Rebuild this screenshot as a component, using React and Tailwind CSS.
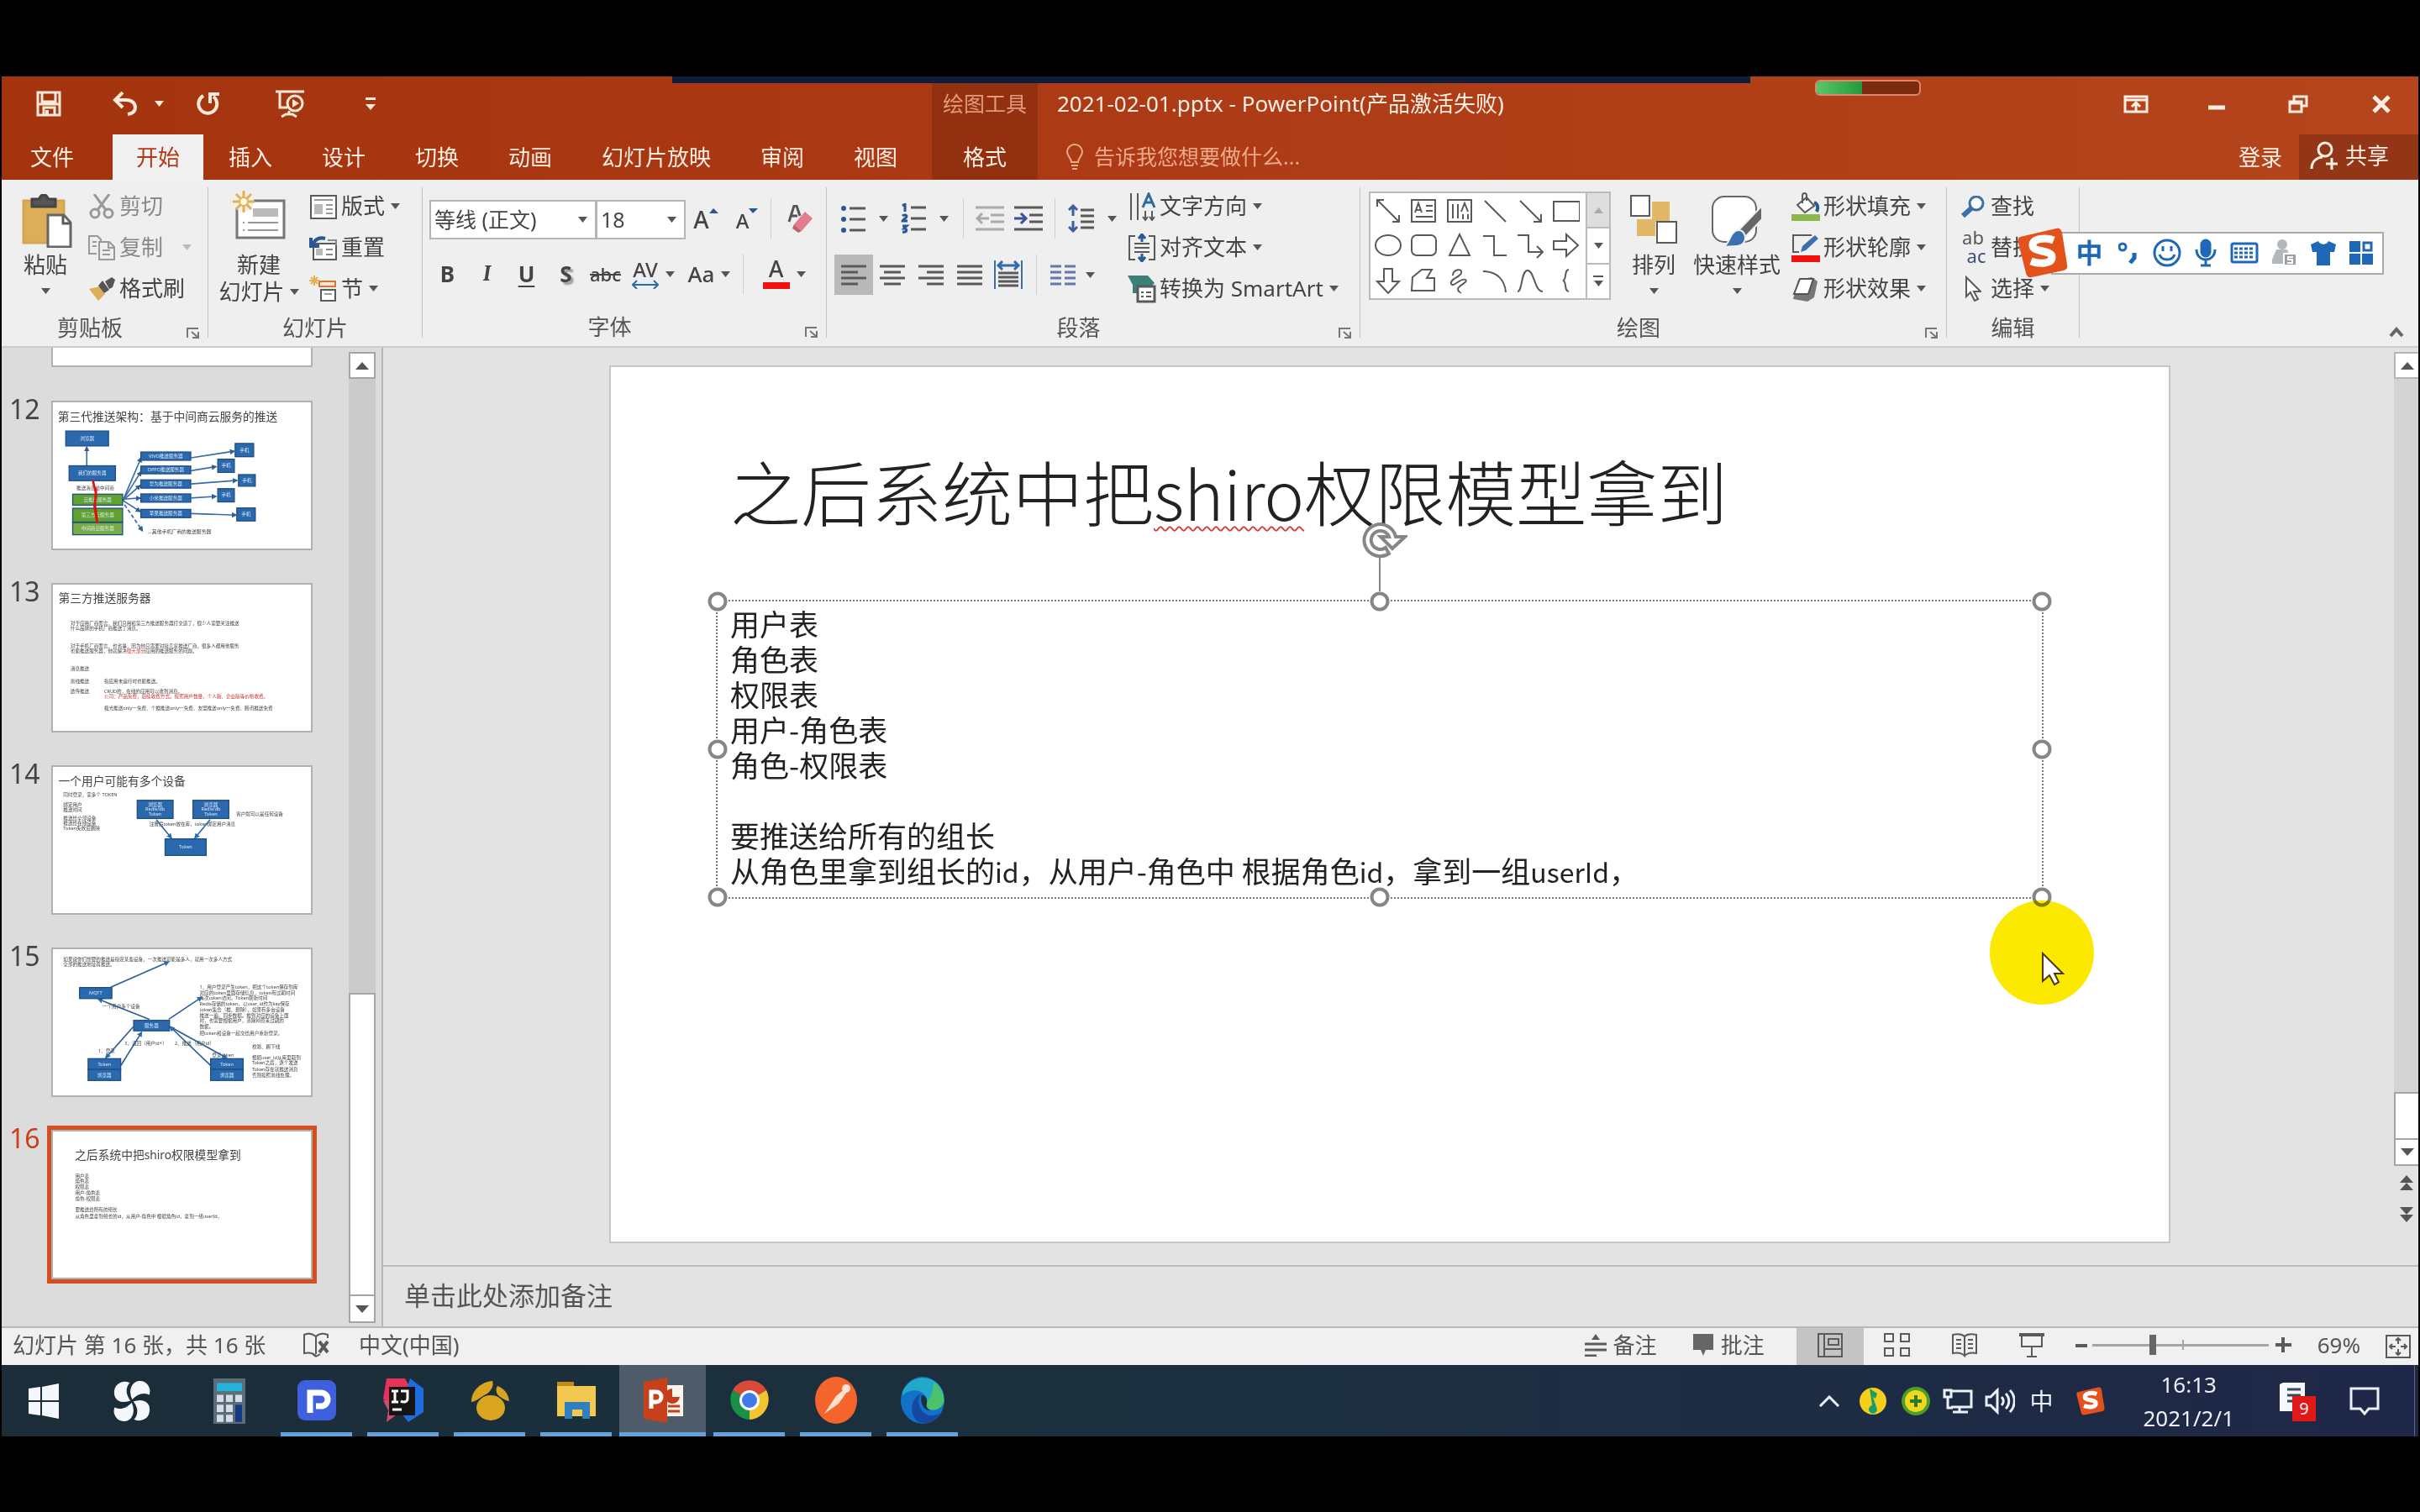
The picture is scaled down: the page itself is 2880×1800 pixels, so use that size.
import React from "react";

const Svg = ({ w, h, vb, children, className = "", ...rest }) => (
  <svg
    width={w}
    height={h}
    viewBox={vb || `0 0 ${w} ${h}`}
    fill="none"
    stroke="#5a5a5a"
    strokeWidth="2"
    aria-hidden="true"
    className={`shrink-0 ${className}`}
    {...rest}
  >
    {children}
  </svg>
);

const Caret = ({ fill = "#555" }) => (
  <svg width="11" height="7" viewBox="0 0 11 7" aria-hidden="true" className="shrink-0">
    <path d="M0 0h11L5.5 7z" fill={fill} />
  </svg>
);

/* ---------- title bar ---------- */

const tabs = ["插入", "设计", "切换", "动画", "幻灯片放映", "审阅", "视图"];

function QuickAccess() {
  return (
    <div className="flex h-[69px] items-center pb-[4px] pl-[41px]">
      <button aria-label="保存" className="mr-[61px]">
        <Svg w={30} h={31} stroke="#fbe9da" strokeWidth="3">
          <path d="M2 2h26v27H2z" />
          <path d="M7 2v11h16V2M3 16h24" />
          <path d="M9 29v-9h13v9" />
          <path d="M13 23v6" strokeWidth="4" />
        </Svg>
      </button>
      <button aria-label="撤消" className="mr-5">
        <Svg w={30} h={29} stroke="#fbe9da" strokeWidth="4">
          <path d="M3 10h13c7 0 11 4 11 9 0 4-3 7-9 8" />
          <path d="M12 1L3 10l9 9" />
        </Svg>
      </button>
      <button aria-label="撤消选项" className="mr-[38px]">
        <Caret fill="#fbe9da" />
      </button>
      <button aria-label="重复" className="mr-[66px]">
        <Svg w={29} h={29} stroke="#fbe9da" strokeWidth="4">
          <path d="M9 5a11 11 0 1 0 12 1" />
          <path d="M17 14V3h11" />
        </Svg>
      </button>
      <button aria-label="从头开始" className="mr-[72px]">
        <Svg w={35} h={34} stroke="#fbe9da" strokeWidth="3">
          <path d="M0 2h34M5 3v18h9" />
          <circle cx="23" cy="16" r="9" />
          <path d="M20 11v10l8-5z" fill="#fbe9da" stroke="none" />
          <path d="M16 25v4M7 32l5-3h8l5 3" />
        </Svg>
      </button>
      <button aria-label="自定义快速访问工具栏">
        <Svg w={12} h={15} stroke="none">
          <path d="M0 0h12v3H0zM0 8h12l-6 7z" fill="#fbe9da" />
        </Svg>
      </button>
    </div>
  );
}

function Header() {
  return (
    <header className="relative flex bg-linear-to-r from-[#a4340e] via-[#ad3b15] to-[#b5451c] text-[#fdeee4]">
      <div className="w-[1107px] shrink-0">
        <QuickAccess />
        <nav className="flex h-[54px] text-[26px] leading-[46px]">
          <button className="w-[120px]">文件</button>
          <button className="ml-3 w-[108px] bg-[#f0f0f0] text-[#b03c17]">开始</button>
          {tabs.map((t) => (
            <button key={t} className="pl-[30px] pr-[29px]">
              {t}
            </button>
          ))}
        </nav>
      </div>
      <div className="w-[126px] shrink-0 bg-[#933010] text-center">
        <div className="h-[69px] text-[25px] leading-[65px] text-[#e29a7b]">绘图工具</div>
        <button className="h-[54px] w-full text-[26px] leading-[46px]">格式</button>
      </div>
      <div className="min-w-0 flex-1">
        <div className="flex h-[69px] items-center justify-between pb-[4px] pl-[23px] pr-[33px]">
          <h2 className="text-[26px]">2021-02-01.pptx - PowerPoint(产品激活失败)</h2>
          <div className="flex items-center">
            <button aria-label="功能区显示选项" className="mr-[70px]">
              <Svg w={30} h={22} stroke="#fdeee4" strokeWidth="3">
                <path d="M2 2h26v18H2zM2 6h26" />
                <path d="M15 20V10M10 14l5-5 5 5" />
              </Svg>
            </button>
            <button aria-label="最小化" className="mr-[74px]">
              <Svg w={22} h={22} stroke="#fdeee4" strokeWidth="5">
                <path d="M1 15h20" />
              </Svg>
            </button>
            <button aria-label="向下还原" className="mr-[76px]">
              <Svg w={24} h={22} stroke="#fdeee4" strokeWidth="3">
                <path d="M2 8h14v12H2zM2 10h14" />
                <path d="M7 7V2h15v11h-5" />
              </Svg>
            </button>
            <button aria-label="关闭">
              <Svg w={22} h={22} stroke="#fdeee4" strokeWidth="5">
                <path d="M2 2l18 18M20 2L2 20" />
              </Svg>
            </button>
          </div>
        </div>
        <div className="flex h-[54px] items-center">
          <Svg w={22} h={32} className="ml-[33px]" stroke="#eda98a" strokeWidth="2">
            <path d="M7 22c0-5-5-7-5-12a9 9 0 0 1 18 0c0 5-5 7-5 12zM7 26h8M8 30h6" />
          </Svg>
          <input
            aria-label="告诉我您想要做什么"
            placeholder="告诉我您想要做什么..."
            className="ml-3 w-[300px] bg-transparent text-[25px] outline-none placeholder:text-[#eda98a]"
          />
          <button className="ml-auto mr-5 h-[54px] text-[26px] leading-[46px]">登录</button>
          <button className="flex h-[54px] w-[142px] items-center gap-[6px] bg-[#933617] pb-1 pl-[13px] text-[26px]">
            <Svg w={36} h={34} stroke="#fdeee4" strokeWidth="3">
              <circle cx="18" cy="10" r="8" />
              <path d="M2 33c0-8 5-13 13-14M26 20v14M19 27h14" />
            </Svg>
            共享
          </button>
        </div>
      </div>
      <div className="absolute left-[798px] top-0 h-2 w-[1283px] bg-[#101c3c]" />
      <div className="absolute left-[2158px] top-1 flex h-[19px] w-[126px] overflow-hidden rounded-[6px] border-2 border-[#d98a6c] bg-[#7d2b10]">
        <div className="w-[44%] bg-linear-to-r from-[#5cc56a] to-[#1e9a3c]" />
      </div>
    </header>
  );
}

/* ---------- ribbon ---------- */

function Group({ label, width, launcher, children }) {
  return (
    <section className={`flex shrink-0 ${width}`}>
      <div className="flex min-w-0 flex-1 flex-col">
        <div className="flex h-[147px]">{children}</div>
        <div className="flex flex-1 items-center text-[26px] leading-[45px] text-[#555]">
          <span className={`flex-1 text-center ${launcher ? "pr-[10px]" : ""}`}>{label}</span>
          {launcher && (
            <button aria-label={`${label}选项`} className="mr-[9px] mt-3">
              <Svg w={16} h={13} stroke="#777">
                <path d="M1 12V1h13M6 5l8 7M14 5v7H7" />
              </Svg>
            </button>
          )}
        </div>
      </div>
      <div className="mb-[10px] mt-[2px] w-px bg-[#c4c4c4]" />
    </section>
  );
}

const Row = ({ icon, children, caret, muted }) => (
  <button
    className={`flex h-[49px] items-center gap-[4px] whitespace-nowrap text-[26px] ${muted ? "text-[#888]" : "text-[#444]"}`}
  >
    <span className="flex w-[34px] shrink-0 justify-center">{icon}</span>
    <span className="flex items-center gap-[7px]">
      {children}
      {caret && <Caret fill={muted ? "#bbb" : "#555"} />}
    </span>
  </button>
);

const Sep = ({ className = "" }) => <div className={`h-12 w-px shrink-0 bg-[#cfcfcf] ${className}`} />;

const Tool = ({ label, children, className = "w-[47px]" }) => (
  <button aria-label={label} className={`flex h-12 shrink-0 items-center justify-center text-[#444] ${className}`}>
    {children}
  </button>
);

function Clipboard() {
  return (
    <Group label="剪贴板" width="w-[246px]" launcher>
      <button className="ml-[14px] flex w-[76px] shrink-0 flex-col items-center pt-[10px] text-[26px] leading-8 text-[#444]">
        <Svg w={60} h={64} className="ml-1" strokeWidth="3">
          <path d="M2 8h48v50H2z" fill="#dcae5a" stroke="#d2a552" />
          <path d="M12 6h9a5 5 0 0 1 10 0h9v9H12z" fill="#555" stroke="#444" />
          <path d="M31 25h19l8 9v29H31z" fill="#fff" stroke="#666" />
          <path d="M49 26v9h9" />
        </Svg>
        <span className="mt-1">粘贴</span>
        <span className="mt-3">
          <Caret />
        </span>
      </button>
      <div className="ml-3 flex flex-col">
        <Row
          muted
          icon={
            <Svg w={30} h={30} stroke="#999" strokeWidth="3">
              <circle cx="7" cy="23" r="5" />
              <circle cx="23" cy="23" r="5" />
              <path d="M6 0l14 19M24 0L10 19" />
            </Svg>
          }
        >
          剪切
        </Row>
        <Row
          muted
          icon={
            <Svg w={32} h={30} stroke="#999" strokeWidth="2">
              <path d="M10 22H1V1h10l4 4v2M13 8h12l6 6v15H13zM24 8v7h7M5 8h5M5 13h5M17 18h9M17 23h9" />
            </Svg>
          }
        >
          复制
          <span className="ml-4 flex">
            <Caret fill="#bbb" />
          </span>
        </Row>
        <Row
          icon={
            <Svg w={32} h={28} stroke="none">
              <path d="M1 14l13-3 6 9-8 8z" fill="#dcae5a" />
              <path d="M12 10l5-6 8 11-6 4z" fill="#555" />
              <path d="M20 5l8-5 4 3-3 9-4 2z" fill="#555" />
            </Svg>
          }
        >
          格式刷
        </Row>
      </div>
    </Group>
  );
}

function Slides() {
  return (
    <Group label="幻灯片" width="w-[255px]">
      <button className="ml-2 flex w-[104px] shrink-0 flex-col items-center pt-[6px] text-[26px] leading-8 text-[#444]">
        <Svg w={66} h={60}>
          <path d="M7 12h56v44H7z" fill="#fff" stroke="#777" strokeWidth="3" />
          <path d="M26 21h30v10H26z" fill="#bbb" stroke="none" />
          <path d="M14 38h2M14 47h2M20 38h36M20 47h36" stroke="#999" />
          <circle cx="15" cy="13" r="12" fill="#f0f0f0" stroke="none" />
          <path d="M15 0v26M2 13h26M6 4l18 18M24 4L6 22" stroke="#e3b052" strokeWidth="3" />
          <circle cx="15" cy="13" r="5" fill="#fff8e6" stroke="#e3b052" />
        </Svg>
        <span className="mt-3">新建</span>
        <span className="flex items-center gap-[6px]">
          幻灯片
          <Caret />
        </span>
      </button>
      <div className="ml-2 flex flex-col">
        <Row
          caret
          icon={
            <Svg w={34} h={30}>
              <path d="M2 2h30v27H2z" fill="#fff" />
              <path d="M6 7h22M20 13h8M20 18h8M20 23h8" stroke="#999" />
              <path d="M6 12h10v12H6z" fill="#bbb" stroke="none" />
            </Svg>
          }
        >
          版式
        </Row>
        <Row
          icon={
            <Svg w={34} h={30}>
              <path d="M5 10h27v19H5z" fill="#fff" />
              <path d="M22 6h10v6M20 17h8M20 23h8" stroke="#888" />
              <path d="M8 16h8v8H8z" fill="#bbb" stroke="none" />
              <path d="M4 12C6 5 12 2 19 4M2 3v10h10" stroke="#2b5797" strokeWidth="4" />
            </Svg>
          }
        >
          重置
        </Row>
        <Row
          caret
          icon={
            <Svg w={34} h={32}>
              <path d="M12 7h19v6H12z" stroke="#d07a3c" fill="#fbe3cf" />
              <path d="M14 17h17v13H14z" fill="#fff" />
              <path d="M18 22h9" stroke="#999" />
              <path d="M6 0v12M0 6h12M2 2l8 8M10 2l-8 8" stroke="#e3b052" />
            </Svg>
          }
        >
          节
        </Row>
      </div>
    </Group>
  );
}

function ComboBox({ label, value, width }) {
  return (
    <label className={`relative -mr-px block h-[47px] border-2 border-[#b5b5b5] bg-white ${width}`}>
      <select aria-label={label} className="h-full w-full appearance-none bg-transparent px-1 text-[25px] leading-[38px] text-[#444]">
        <option>{value}</option>
      </select>
      <span className="pointer-events-none absolute right-[9px] top-[18px]">
        <Caret />
      </span>
    </label>
  );
}

function FontGroup() {
  return (
    <Group label="字体" width="w-[481px]" launcher>
      <div className="pl-[8px] pt-[16px]">
        <div className="flex items-center">
          <ComboBox label="字体" value="等线 (正文)" width="w-[199px]" />
          <ComboBox label="字号" value="18" width="w-[107px]" />
          <Tool label="增大字号" className="w-[50px]">
            <span className="text-[28px] font-medium">A</span>
            <Svg w={11} h={6} className="-mt-5" stroke="none">
              <path d="M0 6h11L5 0z" fill="#2b5797" />
            </Svg>
          </Tool>
          <Tool label="减小字号" className="w-12">
            <span className="mt-1 text-[24px] font-medium">A</span>
            <Svg w={11} h={6} className="-mt-5" stroke="none">
              <path d="M0 0h11L5 6z" fill="#2b5797" />
            </Svg>
          </Tool>
          <Sep className="mx-1" />
          <Tool label="清除所有格式" className="w-[60px]">
            <Svg w={32} h={34} stroke="none">
              <path d="M3 20L9 1h3l4 12M5 13h8" stroke="#555" strokeWidth="3" />
              <path d="M9 23L22 8l9 8-13 15z" fill="#e27d8d" />
              <path d="M9 23l9 8-4 2-7-5z" fill="#c45f70" />
            </Svg>
          </Tool>
        </div>
        <div className="-ml-[2px] mt-[17px] flex items-center text-[26px]">
          <Tool label="加粗"><b>B</b></Tool>
          <Tool label="倾斜"><i className="font-serif font-bold">I</i></Tool>
          <Tool label="下划线"><b className="underline decoration-2 underline-offset-4">U</b></Tool>
          <Tool label="文字阴影"><b className="text-shadow-[3px_3px_2px_#999]">S</b></Tool>
          <Tool label="删除线"><span className="text-[22px] font-medium line-through">abc</span></Tool>
          <Tool label="字符间距" className="w-[67px] gap-2">
            <span className="flex flex-col items-center text-[24px] leading-6 font-medium">
              AV
              <Svg w={32} h={11} stroke="#2b6cb0" strokeWidth="2">
                <path d="M1 6h30M6 1L1 6l5 5M26 1l5 5-5 5" />
              </Svg>
            </span>
            <Caret />
          </Tool>
          <Tool label="更改大小写" className="w-[66px] gap-2"><span className="font-medium">Aa</span><Caret /></Tool>
          <Sep className="ml-[7px] mr-[11px]" />
          <Tool label="字体颜色" className="w-[74px] gap-2">
            <span className="flex w-8 flex-col items-center text-[27px] font-medium leading-6">
              A
              <span className="mt-1 h-2 w-8 bg-[#f01010]" />
            </span>
            <Caret />
          </Tool>
        </div>
      </div>
    </Group>
  );
}

const Lines = ({ d, color = "#5a5a5a" }) => (
  <Svg w={30} h={28} stroke={color} strokeWidth="3">
    <path d={d} />
  </Svg>
);

function Paragraph() {
  return (
    <Group label="段落" width="w-[635px]" launcher>
      <div className="w-[349px] shrink-0 pl-[9px] pt-[15px]">
        <div className="flex items-center">
          <Tool label="项目符号" className="w-[70px] gap-4">
            <Svg w={30} h={34} strokeWidth="3">
              <path d="M11 5h19M11 18h19M11 31h19" />
              <g fill="#2b5797" stroke="none"><circle cx="4" cy="5" r="3" /><circle cx="4" cy="18" r="3" /><circle cx="4" cy="31" r="3" /></g>
            </Svg>
            <Caret />
          </Tool>
          <Tool label="编号" className="w-[75px] gap-4">
            <Svg w={30} h={36} strokeWidth="3">
              <path d="M12 5h18M12 18h18M12 31h18" />
              <path d="M2 3l3-2v9M2 15c2-2 5-1 5 1 0 1-5 4-5 5h6M2 27h5l-3 3c4 0 4 5-2 4" stroke="#2b5797" />
            </Svg>
            <Caret />
          </Tool>
          <Sep className="mx-[8px]" />
          <Tool label="减少缩进" className="w-[46px]">
            <Svg w={34} h={30} stroke="#aaa" strokeWidth="3">
              <path d="M0 2h34M18 11h16M18 19h16M0 28h34M2 15h14M8 9l-6 6 6 6" />
            </Svg>
          </Tool>
          <Tool label="增加缩进" className="w-[46px]">
            <Svg w={34} h={30} strokeWidth="3">
              <path d="M0 2h34M18 11h16M18 19h16M0 28h34" />
              <path d="M0 15h14M8 9l6 6-6 6" stroke="#3b4f9a" />
            </Svg>
          </Tool>
          <Sep className="mx-[8px]" />
          <Tool label="行距" className="w-[72px] gap-4">
            <Svg w={31} h={34} strokeWidth="3">
              <path d="M15 7h16M15 14h16M15 21h16M15 28h16" />
              <path d="M6 2v12M6 20v12M1 7l5-5 5 5M1 27l5 5 5-5" stroke="#3b5fa0" />
            </Svg>
            <Caret />
          </Tool>
        </div>
        <div className="mt-[19px] flex items-center">
          <Tool label="左对齐" className="w-[46px] bg-[#b9b9b9]"><Lines d="M0 4h30M0 11h20M0 18h30M0 25h20" /></Tool>
          <Tool label="居中" className="w-[46px]"><Lines d="M0 4h30M5 11h20M0 18h30M5 25h20" /></Tool>
          <Tool label="右对齐" className="w-[46px]"><Lines d="M0 4h30M10 11h20M0 18h30M10 25h20" /></Tool>
          <Tool label="两端对齐" className="w-[46px]"><Lines d="M0 4h30M0 11h30M0 18h30M0 25h30" /></Tool>
          <Tool label="分散对齐" className="w-[46px]">
            <Svg w={34} h={34}>
              <path d="M1 0v34M33 0v34" stroke="#3b6fa8" />
              <path d="M5 15h24M5 20h24M5 25h24M5 30h24" strokeWidth="3" />
              <path d="M5 6h24M10 1L5 6l5 5M24 1l5 5-5 5" stroke="#2b6cb0" strokeWidth="3" />
            </Svg>
          </Tool>
          <Sep className="ml-[10px] mr-1" />
          <Tool label="分栏" className="w-[76px] gap-3">
            <Lines color="#6679a8" d="M0 4h13M17 4h13M0 11h13M17 11h13M0 18h13M17 18h13M0 25h13M17 25h13" />
            <Caret />
          </Tool>
        </div>
      </div>
      <div className="ml-[9px] flex flex-col">
        <Row
          caret
          icon={
            <Svg w={34} h={34}>
              <path d="M4 1v32M12 1v32M21 22v11M29 22v11" strokeWidth="2" />
              <path d="M18 29l3 4 3-4M26 29l3 4 3-4" />
              <path d="M18 18l7-16 7 16M21 12h8" stroke="#2b6c9a" strokeWidth="3" />
            </Svg>
          }
        >
          文字方向
        </Row>
        <Row
          caret
          icon={
            <Svg w={34} h={34}>
              <path d="M9 3H2v28h7M25 3h7v28h-7M8 12h18M8 17h18M8 22h18" />
              <path d="M17 1v9M17 24v9M13 6l4-5 4 5M13 28l4 5 4-5" stroke="#2b5797" strokeWidth="3" />
            </Svg>
          }
        >
          对齐文本
        </Row>
        <Row
          caret
          icon={
            <Svg w={34} h={34} strokeWidth="3">
              <path d="M0 1h24l8 9-5 5H12v7H6V12z" fill="#3b7f76" stroke="none" />
              <path d="M12 14h20v18H12z" fill="#fff" />
              <path d="M16 21h3M22 21h6M16 26h3M22 26h6" strokeWidth="2" />
            </Svg>
          }
        >
          转换为 SmartArt
        </Row>
      </div>
    </Group>
  );
}

const shapes = [
  <path d="M3 3l26 26M3 11V3h8M21 29h8v-8" />,
  <><path d="M2 3h28v26H2zM19 10h8M19 16h8M7 23h20" /><path d="M6 18l4-11 4 11M7 15h6" /></>,
  <><path d="M2 3h28v26H2zM8 8v17M14 8v17M20 20v6M26 20v6" /><path d="M18 17l4-10 4 10" /></>,
  <path d="M4 4l25 25" />,
  <path d="M4 4l25 25M29 20v9h-9" />,
  <path d="M1 5h31v23H1z" />,
  <ellipse cx="16" cy="16" rx="15" ry="12" />,
  <rect x="2" y="4" width="29" height="24" rx="6" />,
  <path d="M16 3L4 28h24z" />,
  <path d="M2 5h13v23h15" />,
  <path d="M1 4h13v20h16M24 17l7 7-7 7" />,
  <path d="M1 11h15V3l14 13-14 13v-8H1z" />,
  <path d="M11 2h10v15h8L16 31 3 17h8z" />,
  <path d="M3 12L14 3h12l-6 10h9v15H2z" />,
  <path d="M8 10c0-8 12-9 10-3-1 5-14 7-12 13 2 5 12-8 17-5 4 3-9 7-9 11s4 4 3 5" />,
  <path d="M2 5c16 0 26 10 27 25" />,
  <path d="M1 29C7 29 5 4 13 4s8 25 18 25" />,
  <path d="M19 3c-6 0-2 12-7 13 5 1 1 13 7 13" />,
];

function Drawing() {
  return (
    <Group label="绘图" width="w-[698px]" launcher>
      <div className="ml-[10px] mt-[7px] flex h-[129px] w-[288px] shrink-0 border-2 border-[#bbb] bg-white">
        <div className="grid flex-1 grid-cols-6 grid-rows-3 place-items-center pr-[2px]">
          {shapes.map((s, i) => (
            <button key={i} aria-label={`形状 ${i + 1}`}>
              <Svg w={32} h={32}>{s}</Svg>
            </button>
          ))}
        </div>
        <div className="flex w-7 flex-col border-l-2 border-[#bbb]">
          <button aria-label="上一行" className="flex flex-1 items-center justify-center bg-[#dedede]">
            <span className="rotate-180"><Caret fill="#aaa" /></span>
          </button>
          <button aria-label="下一行" className="flex flex-1 items-center justify-center border-y-2 border-[#bbb]"><Caret /></button>
          <button aria-label="其他形状" className="flex flex-1 flex-col items-center justify-center gap-1">
            <span className="h-[2px] w-3 bg-[#555]" />
            <Caret />
          </button>
        </div>
      </div>
      <button className="ml-[15px] flex w-[72px] shrink-0 flex-col items-center pt-[10px] text-[26px] leading-8 text-[#444]">
        <Svg w={58} h={60} strokeWidth="2">
          <path d="M27 9h21v24H27zM9 30h22v20H9z" fill="#e2b867" stroke="none" />
          <path d="M2 2h22v24H2zM33 33h23v25H33z" fill="#fff" />
        </Svg>
        <span className="mt-2">排列</span>
        <span className="mt-3"><Caret /></span>
      </button>
      <button className="ml-[6px] flex w-[114px] shrink-0 flex-col items-center pt-[10px] text-[26px] leading-8 text-[#444]">
        <Svg w={64} h={64}>
          <rect x="3" y="3" width="52" height="54" rx="14" fill="#fff" stroke="#666" />
          <path d="M62 14v16L42 51l-8-8z" fill="#666" stroke="#f0f0f0" />
          <path d="M16 63c7-2 8-20 18-20s12 18-2 19z" fill="#3a6fb0" stroke="#f0f0f0" />
        </Svg>
        <span className="mt-1">快速样式</span>
        <span className="mt-3"><Caret /></span>
      </button>
      <div className="ml-[8px] flex flex-col">
        <Row
          caret
          icon={
            <Svg w={34} h={34}>
              <path d="M7 15l11-9 9 10-11 8z" fill="#fff" />
              <path d="M13 13V4c0-4 5-4 5 0v6" />
              <path d="M27 12c5 2 5 7 3 11" stroke="#2b5797" strokeWidth="4" />
              <path d="M0 26h34v8H0z" fill="#8bb84a" stroke="none" />
            </Svg>
          }
        >
          形状填充
        </Row>
        <Row
          caret
          icon={
            <Svg w={34} h={34}>
              <path d="M24 2H2v20h7" />
              <path d="M11 22l2-7L28 2l4 4-15 14z" fill="#3a6fb0" stroke="none" />
              <path d="M0 26h34v8H0z" fill="#f01010" stroke="none" />
            </Svg>
          }
        >
          形状轮廓
        </Row>
        <Row
          caret
          icon={
            <Svg w={34} h={30}>
              <path d="M8 4l16-3 7 5-4 19-8 5-17-3z" fill="#777" stroke="none" />
              <path d="M10 3h16l-6 18H3z" fill="#fff" stroke="#555" />
            </Svg>
          }
        >
          形状效果
        </Row>
      </div>
    </Group>
  );
}

function Editing() {
  return (
    <Group label="编辑" width="w-[158px]">
      <div className="ml-[14px] flex flex-col">
        <Row
          icon={
            <Svg w={30} h={26} stroke="#3a6fa8" strokeWidth="3">
              <circle cx="19" cy="9" r="8" fill="#fff" />
              <path d="M13 15L3 24" strokeWidth="6" />
            </Svg>
          }
        >
          查找
        </Row>
        <Row
          icon={
            <span className="flex flex-col pb-1 text-[22px] leading-[22px] text-[#555]">
              ab
              <span className="ml-2 text-[#3a4f7a]">ac</span>
            </span>
          }
        >
          替换
        </Row>
        <Row
          caret
          icon={
            <Svg w={20} h={32}>
              <path d="M2 2v23l5-5 5 10 4-2-5-9h8z" fill="#fff" />
            </Svg>
          }
        >
          选择
        </Row>
      </div>
    </Group>
  );
}

const SogouMark = ({ w, h }) => (
  <Svg w={w} h={h} vb="0 0 60 60" stroke="none">
    <path d="M3 11L46 1c4-1 6 1 7 5l6 38c1 4-1 6-4 7L17 59c-4 1-6-1-7-5L1 18c-1-4 0-6 2-7z" fill="#e4521b" />
    <path d="M43 15c-10-4-25-2-25 6 0 9 23 5 23 14 0 8-14 9-25 5" stroke="#fff" strokeWidth="9" />
  </Svg>
);

function SogouBar() {
  const c = "#1f68b8";
  return (
    <div className="absolute right-[41px] top-[56px] flex items-center">
      <button aria-label="搜狗输入法" className="relative z-10 -mr-[20px]"><SogouMark w={60} h={60} /></button>
      <div className="flex h-[51px] w-[396px] items-center border-2 border-[#aaa] bg-white pl-[20px]">
        <button className="w-[47px] text-center text-[32px] font-bold leading-8 text-[#1f68b8]">中</button>
        <button aria-label="标点" className="flex w-[46px] justify-center">
          <Svg w={24} h={26} stroke={c} strokeWidth="3"><circle cx="5" cy="6" r="4" /><path d="M19 13v6l-5 6" strokeWidth="5" /></Svg>
        </button>
        <button aria-label="表情" className="flex w-[46px] justify-center">
          <Svg w={34} h={34} stroke={c} strokeWidth="3"><circle cx="17" cy="17" r="15" /><path d="M12 9v6M22 9v6M8 19c3 8 15 8 18 0" /></Svg>
        </button>
        <button aria-label="语音" className="flex w-[46px] justify-center">
          <Svg w={26} h={34} stroke={c} strokeWidth="3"><rect x="8" y="2" width="10" height="19" rx="5" fill={c} /><path d="M2 13c0 16 22 16 22 0M13 25v8M7 32h12" /></Svg>
        </button>
        <button aria-label="键盘" className="flex w-[46px] justify-center">
          <Svg w={34} h={26} stroke={c} strokeWidth="3"><rect x="2" y="2" width="30" height="22" rx="2" /><path d="M5 8h24M5 13h24M5 18h24" strokeDasharray="4 2" /></Svg>
        </button>
        <button aria-label="账户" className="flex w-[48px] justify-center">
          <Svg w={32} h={32} stroke="none"><circle cx="14" cy="6" r="6" fill="#b4b8bd" /><path d="M2 24l5-12h13l5 12v5H2z" fill="#b4b8bd" /><path d="M16 17h15v14H16z" fill="#9ba0a6" stroke="#fff" /><path d="M27 21h-6v3h5v4h-6" stroke="#fff" /></Svg>
        </button>
        <button aria-label="皮肤" className="flex w-[46px] justify-center">
          <Svg w={30} h={30} stroke="none"><path d="M9 1c2 5 10 5 12 0l9 4-2 9h-5v16H7V14H2L0 5z" fill={c} /></Svg>
        </button>
        <button aria-label="工具箱" className="flex w-[44px] justify-center">
          <Svg w={28} h={28} stroke={c}><path d="M1 1h11v11H1zM1 16h11v11H1zM16 16h11v11H16z" fill={c} /><path d="M17 2h9v9h-9z" strokeWidth="3" /></Svg>
        </button>
      </div>
    </div>
  );
}

function Ribbon() {
  return (
    <div className="relative flex h-[200px] border-b-2 border-t border-b-[#cbcbcb] border-t-[#fdeee6] bg-[#efefef] pt-[6px]">
      <Clipboard />
      <Slides />
      <FontGroup />
      <Paragraph />
      <Drawing />
      <Editing />
      <button aria-label="折叠功能区" className="mb-[10px] ml-auto mr-[17px] self-end">
        <Svg w={18} h={13} stroke="#666" strokeWidth="4"><path d="M2 11l7-8 7 8" /></Svg>
      </button>
      <SogouBar />
    </div>
  );
}

/* ---------- thumbnails ---------- */

const tip = (id, color) => (
  <marker id={id} viewBox="0 0 10 10" refX="8" refY="5" markerWidth="4" markerHeight="4" orient="auto">
    <path d="M0 0l10 5-10 5z" fill={color} />
  </marker>
);

const Box = ({ x, y, w, h, fill = "#2a69ad", lines, size = 17 }) => (
  <g>
    <rect x={x} y={y} width={w} height={h} fill={fill} stroke="#1f4e82" strokeWidth="4" />
    {lines.map((t, i) => (
      <text
        key={i}
        x={x + w / 2}
        y={y + h / 2 + (i - (lines.length - 1) / 2) * size + size / 3}
        textAnchor="middle"
        fontSize={size}
        fill="#dbe8f6"
      >
        {t}
      </text>
    ))}
  </g>
);

function Thumb({ vb, children }) {
  return (
    <svg viewBox={vb} className="block h-full w-full" fill="#444" role="img" aria-label="幻灯片缩略图">
      {children}
    </svg>
  );
}

const Slide12 = () => (
  <Thumb vb="184 204 928 530">
    <defs>{tip("a12", "#2f5f95")}</defs>
    <text x="198" y="270" fontSize="42">第三代推送架构：基于中间商云服务的推送</text>
    <g stroke="#3a6ca5" strokeWidth="5" fill="none">
      {["M303 434V366", "M434 560L500 405", "M434 560L500 455", "M434 560L497 505", "M434 555L497 551", "M434 560L497 600", "M681 405L838 381", "M681 452L772 437", "M681 500L848 487", "M681 551L772 545", "M681 607L845 613"].map((d) => (
        <path key={d} d={d} markerEnd="url(#a12)" />
      ))}
      <path d="M440 575L505 670" strokeDasharray="14 8" markerEnd="url(#a12)" />
    </g>
    <Box x={227} y={308} w={155} h={54} lines={["浏览器"]} />
    <Box x={239} y={434} w={168} h={54} lines={["我们的服务器"]} />
    <text x="266" y="521" fontSize="17">推送消息给中间商</text>
    <Box x={252} y={537} w={181} h={40} fill="#61a12f" lines={["云推送服务器"]} />
    <Box x={252} y={588} w={181} h={50} fill="#61a12f" lines={["第三方云服务器"]} />
    <Box x={252} y={640} w={181} h={44} fill="#78ad45" lines={["中间商云服务器"]} />
    <path d="M325 486l12 50-6 45 10 60M337 515l-4 60 9 68" stroke="#e01010" strokeWidth="8" fill="none" />
    <Box x={499} y={384} w={181} h={30} lines={["VIVO推送服务器"]} />
    <Box x={499} y={435} w={181} h={28} lines={["OPPO推送服务器"]} />
    <Box x={499} y={485} w={181} h={30} lines={["华为推送服务器"]} />
    <Box x={499} y={536} w={181} h={30} lines={["小米推送服务器"]} />
    <Box x={499} y={592} w={181} h={30} lines={["苹果推送服务器"]} />
    <Box x={841} y={353} w={67} h={48} lines={["手机"]} />
    <Box x={778} y={410} w={60} h={48} lines={["手机"]} />
    <Box x={853} y={466} w={61} h={42} lines={["手机"]} />
    <Box x={778} y={517} w={60} h={48} lines={["手机"]} />
    <Box x={847} y={587} w={67} h={47} lines={["手机"]} />
    <text x="525" y="680" fontSize="18">…其他手机厂商的推送服务器</text>
  </Thumb>
);

const Slide13 = () => (
  <Thumb vb="184 857 928 530">
    <text x="200" y="922" fontSize="42">第三方推送服务器</text>
    <g fontSize="17">
      <text x="244" y="1003">对于应用厂商而言，我们只用和第三方推送服务器打交道了，很少人需要关注推送</text>
      <text x="244" y="1022">什么品牌的手机厂商推送了消息。</text>
      <text x="244" y="1086">对于手机厂商而言，也省事，因为他只需要对接几家推送厂商，很多人都用他服务</text>
      <text x="244" y="1105">也能推送服务器，他就解决<tspan fill="#c33">很大部分</tspan>应用的推送服务的问题。</text>
      <text x="244" y="1167">消息推送</text>
      <text x="244" y="1212">离线推送</text>
      <text x="366" y="1212">指应用未运行时也能推送。</text>
      <text x="244" y="1250">透传推送</text>
      <text x="366" y="1250">CRUD的，在线的应用可以收到消息。</text>
      <text x="366" y="1268" fill="#c33">公司：产品免费，后续收费方式。按照用户数量，个人版、企业版等价格收费。</text>
      <text x="366" y="1312">极光推送only一免费、个推推送only一免费、友盟推送only一免费、腾讯推送免费</text>
    </g>
  </Thumb>
);

const Slide14 = () => (
  <Thumb vb="184 4 928 530">
    <defs>{tip("a14", "#2a69ad")}</defs>
    <text x="200" y="70" fontSize="42">一个用户可能有多个设备</text>
    <g fontSize="17">
      <text x="218" y="112">同时登录，需多个 TOKEN</text>
      <text x="218" y="148">绑定用户</text>
      <text x="218" y="167">推送时间</text>
      <text x="218" y="195">推送给全部设备</text>
      <text x="218" y="214">推送给在线设备</text>
      <text x="218" y="233">Token失效后删除</text>
      <text x="530" y="218">注册后token放在库，token绑定用户消息</text>
      <text x="845" y="182">客户端可以是任何设备</text>
    </g>
    <g stroke="#2a69ad" strokeWidth="5">
      <path d="M555 195l55 67" markerEnd="url(#a14)" />
      <path d="M750 195l-55 67" markerEnd="url(#a14)" />
    </g>
    <Box x={486} y={125} w={130} h={66} lines={["浏览器", "Redis/db", "Token"]} />
    <Box x={688} y={125} w={130} h={66} lines={["浏览器", "Redis/db", "Token"]} />
    <Box x={587} y={265} w={149} h={60} lines={["Token"]} />
  </Thumb>
);

const Slide15 = () => (
  <Thumb vb="184 4 928 530">
    <defs>{tip("a15", "#2a69ad")}</defs>
    <g fontSize="17">
      <text x="218" y="46">如果说你们想要的推送是指定某些设备，一次推送可能是多人，就用一次多人方式</text>
      <text x="218" y="65">全部的推送地址再推送。</text>
      <text x="360" y="218">一个用户多个设备</text>
      <text x="712" y="148">1、用户登录产生token，把这个token保存到库</text>
      <text x="712" y="168">对应的token里面存储信息，token有过期时间</text>
      <text x="712" y="188">每次token访问，Token刷新时间</text>
      <text x="712" y="208">Redis存储的token，以user_id作为key保存</text>
      <text x="712" y="230">token集合（推、删除），如果有多台设备</text>
      <text x="712" y="250">推送一遍，同步数据。推到对应的设备上面</text>
      <text x="712" y="270">时，也需要根据用户，清除掉原来过期的</text>
      <text x="712" y="290">数据。</text>
      <text x="712" y="314">把token和设备一起交给用户重新登录。</text>
      <text x="345" y="378">1、登录</text>
      <text x="440" y="350">3、返回（用户id+）</text>
      <text x="622" y="350">2、推送（用户id）</text>
      <text x="757" y="395">登录token</text>
      <text x="902" y="364">校验、踢下线</text>
      <text x="902" y="402">根据user_id从库里取到</text>
      <text x="902" y="422">Token之后，逐个发送</text>
      <text x="902" y="446">Token存在就推送消息</text>
      <text x="902" y="466">否则按照离线处理。</text>
    </g>
    <g stroke="#2a5f98" strokeWidth="5">
      {["M390 142L600 50", "M600 258l120-80", "M530 258L345 185", "M472 285L372 398", "M427 425l75-120", "M605 285l205 113", "M751 425L605 285"].map((d) => (
        <path key={d} d={d} markerEnd="url(#a15)" />
      ))}
    </g>
    <Box x={277} y={143} w={117} h={40} lines={["MQTT"]} />
    <Box x={473} y={262} w={130} h={38} lines={["服务器"]} />
    <Box x={308} y={401} w={118} h={39} lines={["Token"]} />
    <Box x={308} y={440} w={118} h={40} lines={["浏览器"]} />
    <Box x={752} y={401} w={118} h={39} lines={["Token"]} />
    <Box x={752} y={440} w={118} h={40} lines={["浏览器"]} />
  </Thumb>
);

const Slide16 = () => (
  <Thumb vb="184 4 928 530">
    <text x="260" y="105" fontSize="42">之后系统中把shiro权限模型拿到</text>
    <g fontSize="17">
      <text x="261" y="172">用户表</text>
      <text x="261" y="191">角色表</text>
      <text x="261" y="211">权限表</text>
      <text x="261" y="232">用户-角色表</text>
      <text x="261" y="254">角色-权限表</text>
      <text x="261" y="293">要推送给所有的组长</text>
      <text x="261" y="319">从角色里拿到组长的id，从用户-角色中 根据角色id，拿到一组userId，</text>
    </g>
  </Thumb>
);

const thumbs = [
  [12, Slide12],
  [13, Slide13],
  [14, Slide14],
  [15, Slide15],
  [16, Slide16],
];

function SlidePanel() {
  return (
    <aside className="flex w-[454px] shrink-0 border-r-2 border-[#b5b5b5] bg-[#dcdcdc]">
      <ol className="min-w-0 flex-1 overflow-hidden">
        <li className="mb-[40px] ml-[59px] h-[23px] w-[311px] border-2 border-t-0 border-[#b0b0b0] bg-white" />
        {thumbs.map(([n, S]) => (
          <li key={n} className="mb-[39px] flex items-start">
            <span className={`w-[59px] pl-[9px] text-[32px] leading-5 ${n === 16 ? "text-[#c8401c]" : "text-[#444]"}`}>{n}</span>
            <button
              className={`h-[178px] w-[311px] border-2 border-[#b0b0b0] bg-white ${
                n === 16 ? "outline-[5px] outline-solid outline-[#d34f20]" : ""
              }`}
            >
              <S />
            </button>
          </li>
        ))}
      </ol>
      <div className="mb-[4px] mr-[7px] mt-[5px] flex w-8 shrink-0 flex-col bg-[#cbcbcb]">
        <button aria-label="向上滚动" className="flex h-8 items-center justify-center border-2 border-[#a5a5a5] bg-white">
          <Svg w={16} h={9} stroke="none"><path d="M0 9h16L8 0z" fill="#555" /></Svg>
        </button>
        <div className="flex-1" />
        <div className="h-[361px] border-2 border-[#a5a5a5] bg-white" />
        <button aria-label="向下滚动" className="flex h-8 items-center justify-center border-2 border-t-0 border-[#a5a5a5] bg-white">
          <Svg w={16} h={9} stroke="none"><path d="M0 0h16L8 9z" fill="#555" /></Svg>
        </button>
      </div>
    </aside>
  );
}

/* ---------- slide canvas ---------- */

const L = ({ children }) => <span className="text-[32px]">{children}</span>;

const bodyLines = [
  "用户表",
  "角色表",
  "权限表",
  "用户-角色表",
  "角色-权限表",
  "\u00a0",
  "要推送给所有的组长",
  <>从角色里拿到组长的<L>id</L>，从用户-角色中 根据角色<L>id</L>，拿到一组<L>userId</L>，</>,
];

const handles = [
  "left-0 top-0",
  "left-1/2 top-0",
  "left-full top-0",
  "left-0 top-1/2",
  "left-full top-1/2",
  "left-0 top-full",
  "left-1/2 top-full",
  "left-full top-full",
];

function Canvas() {
  return (
    <div className="relative mx-auto mt-[21px] aspect-video w-[1858px] max-w-full shrink-0 border-2 border-[#c6c6c6] bg-white font-['Noto_Sans_CJK_SC',sans-serif]">
      <h1 className="absolute left-[142px] top-[91px] whitespace-nowrap text-[84px] font-light leading-[112px] text-[#222]">
        之后系统中把
        <span className="text-[80px] underline decoration-[#d04040] decoration-wavy decoration-2 underline-offset-[6px]">shiro</span>
        权限模型拿到
      </h1>
      <div className="absolute left-[125px] top-[277px] h-[356px] w-[1580px] border-2 border-dotted border-[#777]">
        <div className="pl-[15px] pt-[5px] text-[35px] leading-[42px] text-[#222]">
          {bodyLines.map((l, i) => (
            <p key={i} className="h-[42px] whitespace-nowrap">{l}</p>
          ))}
        </div>
        {handles.map((h) => (
          <span
            key={h}
            className={`absolute size-[23px] -translate-x-1/2 -translate-y-1/2 rounded-full border-4 border-[#868686] bg-white ${h}`}
          />
        ))}
        <Svg w={66} h={84} className="absolute -top-[94px] left-1/2 -translate-x-1/2" stroke="#868686" strokeWidth="3">
          <path d="M33 40v42" strokeWidth="2" />
          <path d="M44 37A19 19 0 1 1 52 17H63L48 31 34 17H44A11 11 0 1 0 40 30z" fill="#fff" strokeWidth="4" />
        </Svg>
      </div>
      <svg width="126" height="126" viewBox="0 0 126 126" aria-hidden="true" className="absolute left-[1640px] top-[634px] mix-blend-multiply">
        <circle cx="63" cy="63" r="62" fill="#fbea00" />
      </svg>
      <svg width="30" height="42" viewBox="0 0 30 42" aria-hidden="true" className="absolute left-[1702px] top-[696px]">
        <path d="M2 2v33l8-7 6 11 5-3-5-10h10z" fill="#fff" stroke="#4a3a10" strokeWidth="2" />
      </svg>
    </div>
  );
}

function Workspace() {
  return (
    <div className="flex min-h-0 flex-1">
      <SlidePanel />
      <main className="flex min-w-0 flex-1 flex-col bg-[#e3e3e3]">
        <div className="flex min-h-0 flex-1">
          <div className="min-w-0 flex-1 pl-[3px]">
            <Canvas />
          </div>
          <div className="mt-[5px] flex w-[29px] shrink-0 flex-col">
            <button aria-label="向上滚动" className="flex h-8 items-center justify-center border-2 border-r-0 border-[#b5b5b5] bg-white">
              <Svg w={16} h={9} stroke="none"><path d="M0 9h16L8 0z" fill="#555" /></Svg>
            </button>
            <div className="flex-1 bg-[#d4d4d4]" />
            <div className="h-[57px] border-2 border-r-0 border-[#a5a5a5] bg-white" />
            <button aria-label="向下滚动" className="flex h-[31px] items-center justify-center border-b-2 border-l-2 border-[#a5a5a5] bg-white">
              <Svg w={16} h={9} stroke="none"><path d="M0 0h16L8 9z" fill="#555" /></Svg>
            </button>
            <button aria-label="上一张幻灯片" className="mt-[11px] flex justify-center">
              <Svg w={16} h={18} stroke="none"><path d="M8 0l8 9H0zM8 9l8 9H0z" fill="#555" /></Svg>
            </button>
            <button aria-label="下一张幻灯片" className="mb-[51px] mt-5 flex justify-center">
              <Svg w={16} h={18} stroke="none"><path d="M0 0h16L8 9zM0 9h16l-8 9z" fill="#555" /></Svg>
            </button>
          </div>
        </div>
        <div className="h-[73px] shrink-0 border-t-2 border-[#bcbcbc] pl-[25px] text-[31px] leading-[68px] text-[#555]">
          单击此处添加备注
        </div>
      </main>
    </div>
  );
}

/* ---------- status bar ---------- */

function StatusBar() {
  return (
    <footer className="flex h-[46px] shrink-0 items-center border-t-2 border-[#b8b8b8] bg-[#f0f0f0] pl-[13px] pr-[9px] text-[26px] leading-[38px] text-[#555]">
      <span className="w-[346px] whitespace-nowrap pb-1">幻灯片 第 16 张，共 16 张</span>
      <button aria-label="拼写检查" className="w-[66px] pb-1">
        <Svg w={31} h={30} strokeWidth="2">
          <path d="M15 26V5C10 1 5 1 1 3v22c5-1 10-1 14 3M15 5c4-4 9-4 14-2v4M15 29l5-3M11 26l4 3" />
          <path d="M19 11l10 13M29 11L19 24" strokeWidth="4" />
        </Svg>
      </button>
      <button className="pb-1">中文(中国)</button>
      <div className="ml-auto flex h-full items-center">
        <button className="mr-[42px] flex items-center gap-2 pb-1">
          <Svg w={26} h={28} strokeWidth="3"><path d="M8 8h10l-5-7z" fill="#5a5a5a" stroke="none" /><path d="M0 13h26M0 20h26M0 27h14" /></Svg>
          备注
        </button>
        <button className="mr-[38px] flex items-center gap-2 pb-1">
          <Svg w={26} h={28} stroke="none"><path d="M1 1h24v19h-9l-3 7-3-7H1z" fill="#666" /></Svg>
          批注
        </button>
        <button aria-label="普通视图" className="flex h-full w-20 items-center justify-center bg-[#c4c4c4] pb-1">
          <Svg w={30} h={29}><path d="M1 1h28v27H1zM8 1v27M8 19h21M13 7h12v7H13z" /></Svg>
        </button>
        <button aria-label="幻灯片浏览" className="flex w-20 justify-center pb-1">
          <Svg w={31} h={29}><path d="M1 1h10v9H1zM20 1h10v9H20zM1 18h10v9H1zM20 18h10v9H20z" /></Svg>
        </button>
        <button aria-label="阅读视图" className="flex w-20 justify-center pb-1">
          <Svg w={30} h={29}><path d="M15 27V4C11 0 5 1 1 2v22c5-1 10-1 14 3zM15 4c4-4 10-3 14-2v22c-5-1-10-1-14 3M5 8h6M5 13h6M5 18h6M19 8h6M19 13h6M19 18h6" /></Svg>
        </button>
        <button aria-label="幻灯片放映" className="mr-[12px] flex w-20 justify-center pb-1">
          <Svg w={30} h={29}><path d="M0 2h30" strokeWidth="4" /><path d="M3 3v13h24V3M15 16v12M9 28h12" /></Svg>
        </button>
        <button aria-label="缩小" className="mr-[6px] pb-1"><Svg w={14} h={14} strokeWidth="4"><path d="M0 8h14" /></Svg></button>
        <label className="relative mb-1 flex items-center">
          <input
            type="range"
            aria-label="显示比例"
            defaultValue="34"
            className="h-6 w-[210px] appearance-none bg-transparent [&::-webkit-slider-runnable-track]:h-[3px] [&::-webkit-slider-runnable-track]:bg-[#a5a5a5] [&::-webkit-slider-thumb]:-mt-[11px] [&::-webkit-slider-thumb]:h-6 [&::-webkit-slider-thumb]:w-2 [&::-webkit-slider-thumb]:appearance-none [&::-webkit-slider-thumb]:bg-[#666]"
          />
          <span className="absolute left-[107px] h-3 w-[2px] bg-[#a5a5a5]" />
        </label>
        <button aria-label="放大" className="ml-[8px] mr-[31px] pb-1"><Svg w={19} h={18} strokeWidth="4"><path d="M0 9h19M9 0v18" /></Svg></button>
        <button className="mr-[30px] pb-1">69%</button>
        <button aria-label="按窗口大小调整幻灯片"><Svg w={30} h={28}><path d="M1 1h28v26H1z" /><path d="M15 4v7M15 24v-7M5 14h7M25 14h-7M12 7l3-3 3 3M12 21l3 3 3-3M8 11l-3 3 3 3M22 11l3 3-3 3" /></Svg></button>
      </div>
    </footer>
  );
}

/* ---------- taskbar ---------- */

const apps = [
  ["PixPin", (
    <Svg w={48} h={50} stroke="none">
      <rect x="1" y="1" width="46" height="48" rx="9" fill="#3f5fdc" />
      <path d="M16 40V16h13a8 8 0 0 1 0 16h-6" stroke="#fff" strokeWidth="7" />
    </Svg>
  )],
  ["IntelliJ IDEA", (
    <Svg w={52} h={56} stroke="none">
      <path d="M6 2h22l10 18-30 14-6-8z" fill="#e8325c" />
      <path d="M34 2l16 12v28L32 54 22 42z" fill="#1f6be0" />
      <path d="M2 28l14 2 6 12-16 12 2-14z" fill="#c8506a" />
      <path d="M9 12h31v34H9z" fill="#151515" />
      <path d="M12 17h8M16 17v13M12 30h8M23 17h8v9c0 4-5 5-8 3" stroke="#fff" strokeWidth="3" />
      <path d="M13 39h11" stroke="#fff" strokeWidth="3" />
    </Svg>
  )],
  ["Navicat", (
    <Svg w={48} h={50} stroke="none" fill="#d9a520">
      <ellipse cx="25" cy="34" rx="17" ry="15" />
      <path d="M2 27C2 13 14 3 27 2c2 5-1 11-6 15C14 20 9 26 2 27zM33 8c8 3 13 9 14 18-6-1-11-5-14-8-2-4-2-7 0-10z" />
    </Svg>
  )],
  ["文件资源管理器", (
    <Svg w={48} h={46} stroke="none">
      <path d="M1 1h20v6H1z" fill="#c48a10" />
      <path d="M1 6h46v36H1z" fill="#f2c850" />
      <path d="M10 25h30v20h-9V34H19v11h-9z" fill="#2f80c0" />
    </Svg>
  )],
  ["PowerPoint", (
    <Svg w={50} h={56} stroke="none">
      <path d="M28 10h21v37H28z" fill="#fff4ea" />
      <path d="M36 14v10h9a9 9 0 1 1-9-10z" fill="#c43e1c" />
      <path d="M31 35h14M31 41h14" stroke="#c43e1c" strokeWidth="3" />
      <path d="M2 6l28-5v54L2 50z" fill="#c8401a" />
      <path d="M11 38V18h6a6 6 0 0 1 0 12h-6" stroke="#fff" strokeWidth="5" />
    </Svg>
  )],
  ["Chrome", (
    <Svg w={48} h={52} vb="0 0 48 48" stroke="none">
      <path d="M24 24L4 12a23 23 0 0 1 40 0z" fill="#d94a38" />
      <path d="M24 24L44 12a24 24 0 0 1-20 35z" fill="#f4c430" />
      <path d="M24 24v23A24 24 0 0 1 4 12z" fill="#189048" />
      <circle cx="24" cy="24" r="12" fill="#fff" />
      <circle cx="24" cy="24" r="9" fill="#3f7ae8" />
    </Svg>
  )],
  ["Postman", (
    <Svg w={52} h={58} stroke="none">
      <ellipse cx="26" cy="29" rx="25" ry="28" fill="#f5642c" />
      <path d="M12 45l14-21 12-10 3 2-12 17z" fill="#fde2d2" />
      <circle cx="38" cy="15" r="5" fill="#fde2d2" />
    </Svg>
  )],
  ["Edge", (
    <Svg w={54} h={58} vb="0 0 54 54" preserveAspectRatio="none" stroke="none">
      <circle cx="27" cy="27" r="26" fill="#1272c8" />
      <path d="M3 18C9 4 24 0 34 3c12 3 20 14 18 25-2 8-10 11-17 9-5-2-3-5-3-9 0-8-8-12-14-12S6 18 3 22z" fill="#22a8c8" />
      <path d="M40 7c9 5 14 16 12 23-3 7-11 9-17 7-5-2-3-5-3-9 4-3 8-10 8-21z" fill="#52c65a" opacity=".85" />
      <path d="M25 20c-6 8-2 22 12 24 4 0 8-1 11-3C42 51 32 54 24 52 10 46 12 24 25 20z" fill="#1548a0" />
      <path d="M26 21c5 1 7 5 6 9s0 6 4 8c-7 1-13-8-10-17z" fill="#1a3040" />
    </Svg>
  )],
];

function Taskbar() {
  return (
    <div className="flex h-[85px] shrink-0 items-stretch bg-linear-to-r from-[#1a2d38] via-[#1c303f] to-[#1f2748] text-[#eaf0f6]">
      <button aria-label="开始" className="flex w-[100px] items-center justify-center">
        <Svg w={36} h={42} stroke="none" fill="#f4f8fc">
          <path d="M0 6l14-2v16H0zM16 4l20-4v20H16zM0 22h14v16l-14-2zM16 22h20v20l-20-4z" />
        </Svg>
      </button>
      <button aria-label="Listary" className="ml-1 flex w-[102px] items-center justify-center">
        <Svg w={46} h={52} stroke="#1a2d38" strokeWidth="2" fill="#f4f8fc">
          <path d="M23 26C8 32 0 24 1 14 2 3 14-1 22 4c-6 6-6 14 1 22z" />
          <path d="M23 26c-7-14 0-24 8-25 12-1 17 11 13 19-6-4-14-2-21 6z" />
          <path d="M23 26c15-6 23 2 22 12-1 11-13 15-21 10 6-6 6-14-1-22z" />
          <path d="M23 26c7 14 0 24-8 25C3 52-2 40 2 32c6 4 14 2 21-6z" />
        </Svg>
      </button>
      <button aria-label="计算器" className="ml-[13px] flex w-[104px] items-center justify-center">
        <Svg w={40} h={56} vb="0 0 40 52" preserveAspectRatio="none" stroke="none">
          <path d="M1 1h38v50H1z" fill="#5d6c7b" />
          <path d="M5 6h30v9H5z" fill="#25b3dc" />
          <path d="M5 19h8v8H5zM16 19h8v8h-8zM27 19h8v8h-8zM5 30h8v8H5zM16 30h8v8h-8zM5 41h8v8H5zM16 41h8v8h-8z" fill="#d5dce4" />
          <path d="M27 30h8v19h-8z" fill="#123a80" />
        </Svg>
      </button>
      {apps.map(([name, icon]) => (
        <button
          key={name}
          aria-label={name}
          className={`flex w-[103px] flex-col items-center ${name === "PowerPoint" ? "bg-[#4d5c68]" : ""}`}
        >
          <span className="flex flex-1 items-center pt-1">{icon}</span>
          <span className={`h-[5px] bg-[#62a3dc] ${name === "PowerPoint" ? "w-full" : "w-[85px]"}`} />
        </button>
      ))}
      <div className="ml-auto flex items-center">
        <button aria-label="显示隐藏的图标" className="mr-[22px]"><Svg w={26} h={14} stroke="#eaf0f6" strokeWidth="3"><path d="M2 13L13 2l11 11" /></Svg></button>
        <button aria-label="QQ音乐" className="mr-[16px]">
          <Svg w={34} h={36} stroke="none"><circle cx="17" cy="18" r="16" fill="#f4cf1c" /><path d="M13 3l9 6-2 6-3-2 4 12a5 5 0 1 1-5-2z" fill="#18a06a" /></Svg>
        </button>
        <button aria-label="360安全卫士" className="mr-[14px]">
          <Svg w={36} h={36} stroke="none"><circle cx="18" cy="18" r="17" fill="#4aa028" /><circle cx="18" cy="18" r="13" fill="#f0d820" /><path d="M18 11v14M11 18h14" stroke="#2d7a1c" strokeWidth="4" /></Svg>
        </button>
        <button aria-label="网络" className="mr-[14px]">
          <Svg w={36} h={32} stroke="#eaf0f6" strokeWidth="3"><path d="M10 4h24v19H10M20 23v6M12 29h18M6 12v12h6" /><path d="M2 3h8v8H2z" /></Svg>
        </button>
        <button aria-label="音量" className="mr-[17px]">
          <Svg w={36} h={32} stroke="#eaf0f6" strokeWidth="3"><path d="M2 11h5l8-8v26l-8-8H2zM20 11c3 3 3 7 0 10M25 7c5 5 5 13 0 18M30 3c7 7 7 19 0 26" /></Svg>
        </button>
        <button className="mr-[28px] text-[28px]">中</button>
        <button aria-label="搜狗输入法" className="mr-[45px]"><SogouMark w={34} h={36} /></button>
        <button className="mr-[51px] text-center text-[26px] leading-10">
          <span className="block">16:13</span>
          <span className="block">2021/2/1</span>
        </button>
        <button aria-label="新闻通知" className="relative mr-[36px]">
          <Svg w={50} h={48} stroke="none"><path d="M3 4l4-2h26v34H3z" fill="#f4f8fc" /><path d="M12 10h16M12 17h16M12 24h12" stroke="#3a4560" strokeWidth="3" /></Svg>
          <span className="absolute bottom-0 right-1 flex h-[30px] w-7 items-center justify-center bg-[#e01818] text-[20px]">9</span>
        </button>
        <button aria-label="操作中心" className="mr-[41px]">
          <Svg w={36} h={36} stroke="#eaf0f6" strokeWidth="3"><path d="M2 3h32v24H23l-5 6-5-6H2z" /></Svg>
        </button>
        <div className="h-[85px] w-[5px] border-l border-[#5a6580]" />
      </div>
    </div>
  );
}

export default function App() {
  return (
    <div className="flex h-screen min-h-[1000px] flex-col bg-black px-[2px] pb-[90px] pt-[91px] font-['Noto_Sans','Noto_Sans_CJK_SC',sans-serif]">
      <Header />
      <Ribbon />
      <Workspace />
      <StatusBar />
      <Taskbar />
    </div>
  );
}
